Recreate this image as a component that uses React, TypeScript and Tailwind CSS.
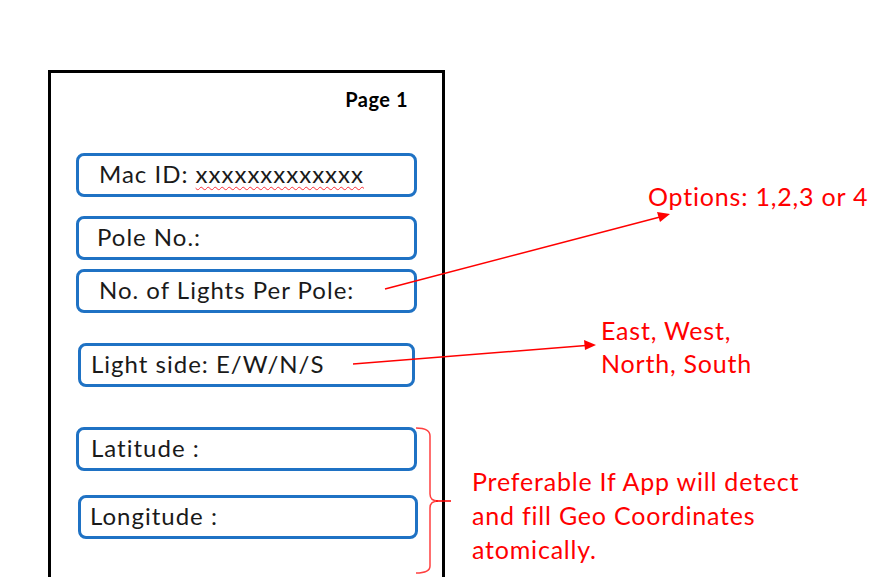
const fieldBox =
  'h-[44px] pb-[3px] rounded-[8px] border-[3px] border-[#1f72c4] flex items-center text-[24px] tracking-[1px] text-[#1a1a1a]';

export default function App() {
  return (
    <div
      className="relative w-[873px] h-[577px] overflow-hidden bg-white"
      style={{ fontFamily: 'Lato, "Open Sans", sans-serif' }}
    >
      {/* phone page mock */}
      <div className="ml-[48px] mt-[70px] w-[397px] h-[520px] border-[3px] border-black px-[25px]">
        <div className="mt-[14px] h-[24px] flex justify-end pr-[9px] text-[20px] leading-[24px] tracking-[0.5px] font-bold text-black">
          Page 1
        </div>

        <div className={`${fieldBox} mt-[42px] pl-[20px]`}>
          <span>
            Mac ID:{' '}
            <span className="underline decoration-wavy decoration-red-500 decoration-1 underline-offset-[3px]">
              xxxxxxxxxxxxx
            </span>
          </span>
        </div>
        <div className={`${fieldBox} mt-[19px] pl-[18px]`}>Pole No.:</div>
        <div className={`${fieldBox} mt-[9px] pl-[20px]`}>No. of Lights Per Pole:</div>
        <div className={`${fieldBox} mt-[30px] mx-[2px] pl-[10px]`}>Light side: E/W/N/S</div>
        <div className={`${fieldBox} mt-[40px] pl-[12px]`}>Latitude :</div>
        <div className={`${fieldBox} mt-[24px] ml-[2px] -mr-[1px] pl-[9px]`}>Longitude :</div>
      </div>

      {/* annotations */}
      <div className="absolute left-[648px] top-[179px] text-[25px] leading-[34px] tracking-[0.8px] text-[#ff0000] whitespace-nowrap">
        Options: 1,2,3 or 4
      </div>
      <div className="absolute left-[601px] top-[314px] text-[25px] leading-[33px] tracking-[0.8px] text-[#ff0000] whitespace-nowrap">
        <div>East, West,</div>
        <div>North, South</div>
      </div>
      <div className="absolute left-[472px] top-[464px] text-[25px] leading-[34px] tracking-[0.8px] text-[#ff0000] whitespace-nowrap">
        <div>Preferable If App will detect</div>
        <div>and fill Geo Coordinates</div>
        <div>atomically.</div>
      </div>

      <svg className="absolute left-0 top-0 pointer-events-none" width="873" height="577">
        <line x1="385" y1="289" x2="660" y2="217" stroke="#ff0000" strokeWidth="1.5" />
        <polygon points="670,214 657,212 660,222" fill="#ff0000" />
        <line x1="353" y1="364" x2="586" y2="345.5" stroke="#ff0000" strokeWidth="1.5" />
        <polygon points="596,345 584,340 585,350" fill="#ff0000" />
        <path
          d="M416 428 Q430 428 430 436 L430 494 Q430 501 438 501 Q430 501 430 508 L430 566 Q430 573 416 573"
          fill="none"
          stroke="#ff4040"
          strokeWidth="1.5"
        />
        <line x1="436" y1="501" x2="451" y2="501" stroke="#ff0000" strokeWidth="1.5" />
      </svg>
    </div>
  );
}
